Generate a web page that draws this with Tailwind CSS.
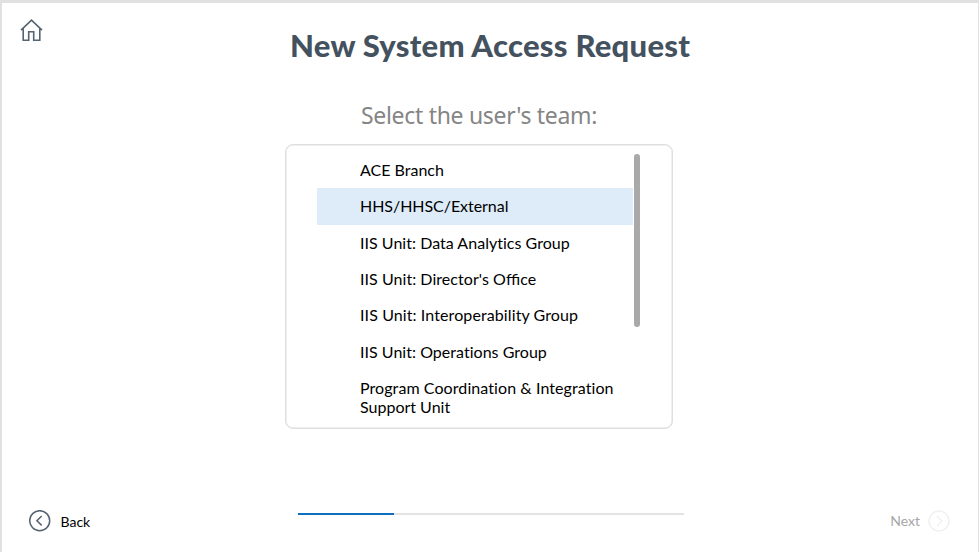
<!DOCTYPE html>
<html lang="en"><head><meta charset="utf-8"><title>New System Access Request</title>
<script src="https://cdn.jsdelivr.net/npm/@tailwindcss/browser@4"></script></head>
<body class="bg-white">
<div class="w-[979px] h-[552px] overflow-hidden border-t-3 border-l-2 border-r border-[#e1e1e1] bg-white font-['Lato',sans-serif] text-black flex flex-col">
<header class="relative h-[84px] shrink-0">
<svg class="absolute left-[18px] top-[16px]" width="23" height="23" viewBox="0 0 23 23" fill="none" stroke="#566370" stroke-width="1.6"><path d="M1 11.2 11.5 1.2 22 11.2M3.2 9.5V21.3H8.7V12.8H13.7V21.3H19.8V9.5"/></svg>
<h1 class="pt-[22px] pl-[288px] text-[31px] leading-[40px] tracking-[0.26px] font-black text-[#445260] whitespace-nowrap">New System Access Request</h1>
</header>
<h2 class="h-[57px] shrink-0 pt-[12px] pl-[359px] text-[23px] leading-[32px] tracking-[-0.31px] text-[#858585] font-['Noto_Sans',sans-serif] whitespace-nowrap">Select the user's team:</h2>
<main class="ml-[283px] w-[388px] h-[285px] shrink-0 rounded-[8px] border-[1.5px] border-[#dfdfdf] shadow-[inset_0_0_0_0.5px_#dfdfdf] flex pl-[31px] pt-[8px]">
<ul class="w-[316px] shrink-0 text-[16px] leading-[19px] [font-variant-ligatures:none]">
<li class="h-[35px] pt-[7px] pl-[43px]">ACE Branch</li>
<li class="h-[37px] pt-[8px] pl-[43px] bg-[#deecf9] tracking-[-0.05px]">HHS/HHSC/External</li>
<li class="h-[36px] pt-[8px] pl-[43px] tracking-[0.03px]">IIS Unit: Data Analytics Group</li>
<li class="h-[36px] pt-[8px] pl-[43px] tracking-[0.05px]">IIS Unit: Director's O<span class="[font-variant-ligatures:normal] tracking-normal">ffi</span>ce</li>
<li class="h-[36px] pt-[8px] pl-[43px] tracking-[0.1px]">IIS Unit: Interoperability Group</li>
<li class="h-[37px] pt-[9px] pl-[43px] tracking-[0.03px]">IIS Unit: Operations Group</li>
<li class="h-[55px] pt-[8px] pl-[43px]"><span class="tracking-[0.08px]">Program Coordination &amp; Integration</span> Support Unit</li>
</ul>
<div class="ml-[1.3px] mt-[1px] w-[6px] h-[173px] rounded-full bg-[#a9a9a9]"></div>
</main>
<footer class="mt-[80px] h-[22px] grid grid-cols-[269px_386px_1fr] shrink-0 pl-[27px] pr-[28px] text-[14px] leading-[22px]">
<div class="flex items-center gap-[9.5px]"><svg width="22" height="22" viewBox="0 0 22 22" fill="none" stroke="#566370" stroke-width="1.5"><circle cx="10.7" cy="10.7" r="10"/><path d="M12.7 6 7.9 10.7 12.7 15.4"/></svg><span class="pt-[2px]">Back</span></div>
<div class="mt-[4px] h-[2px] bg-[#e3e3e3]"><div class="h-full w-[96px] bg-[#106ebe]"></div></div>
<div class="flex justify-end items-center gap-[8px] text-[#a6a6a6]"><span>Next</span><svg width="22" height="22" viewBox="0 0 22 22" fill="none" stroke="#f1f1f1" stroke-width="1.5"><circle cx="11" cy="11" r="10"/><path d="M9 6 14 11 9 16"/></svg></div>
</footer>
</div></body></html>
